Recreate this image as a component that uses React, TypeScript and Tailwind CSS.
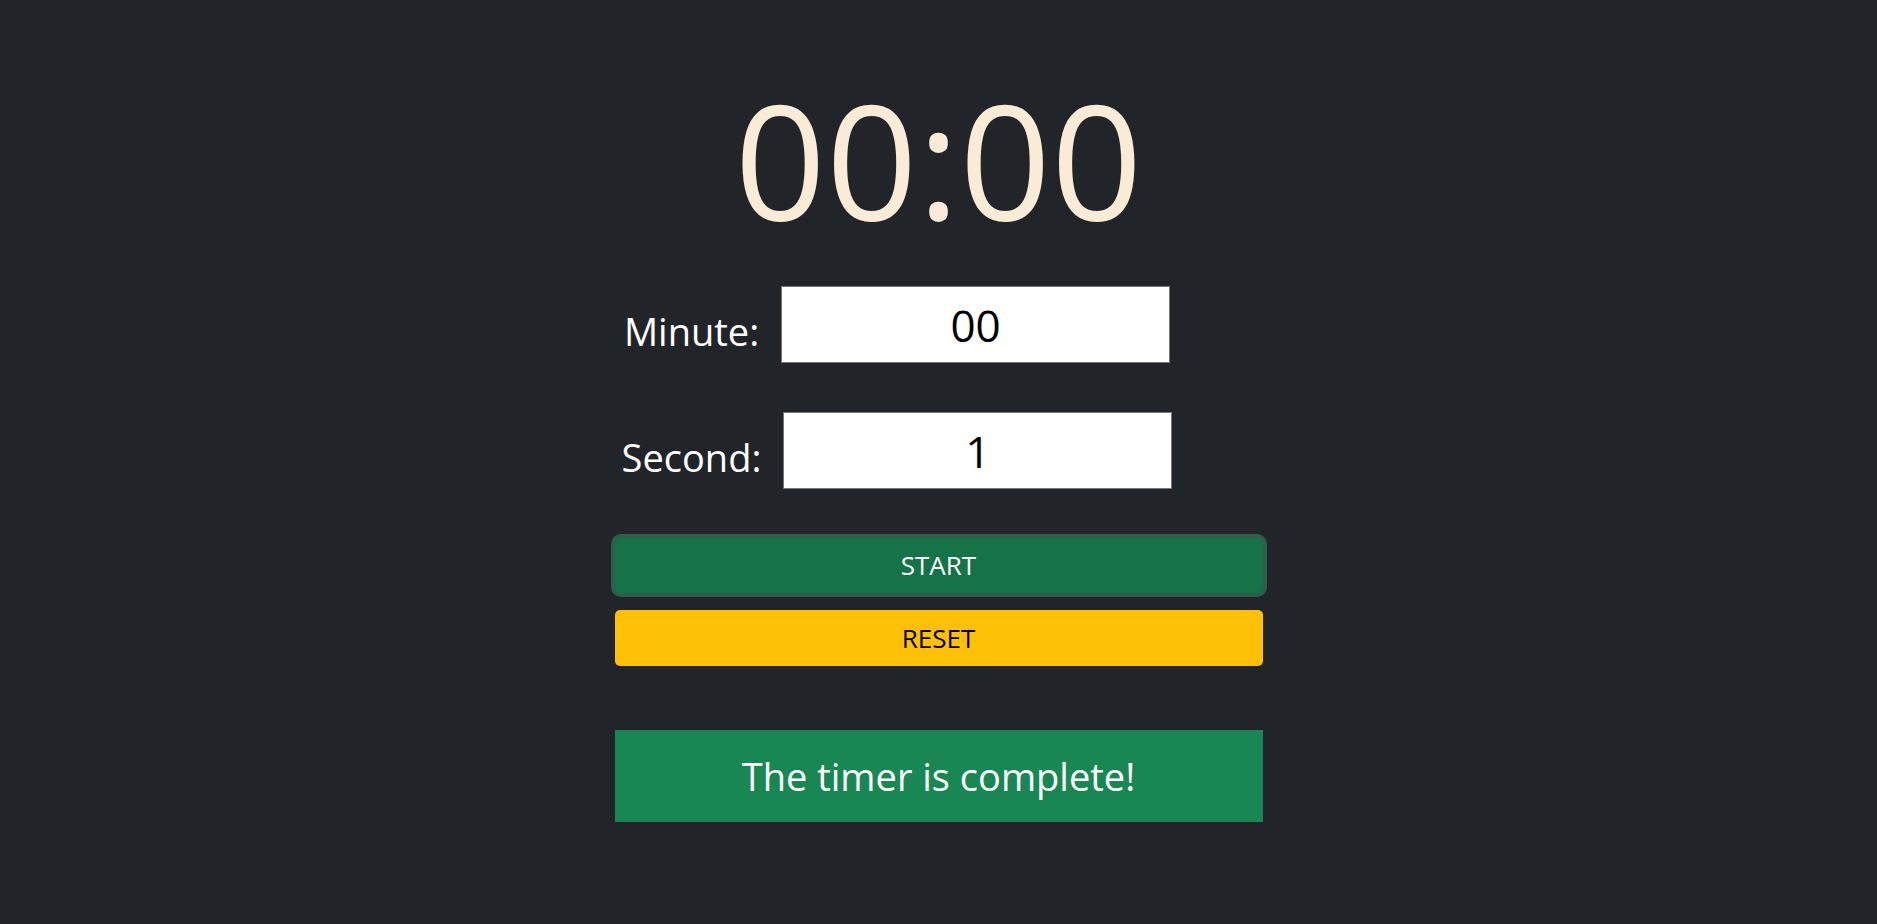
import { useEffect, useState } from "react";

const pad = (n: number) => String(n).padStart(2, "0");

export default function App() {
  const [minute, setMinute] = useState("00");
  const [second, setSecond] = useState("1");
  const [left, setLeft] = useState(0);
  const [running, setRunning] = useState(false);
  const [done, setDone] = useState(true);

  // tick once a second while running
  useEffect(() => {
    if (!running) return;
    const timer = setInterval(() => {
      setLeft((prev) => {
        if (prev <= 1) {
          setRunning(false);
          setDone(true);
          return 0;
        }
        return prev - 1;
      });
    }, 1000);
    return () => clearInterval(timer);
  }, [running]);

  const start = () => {
    const total = (parseInt(minute) || 0) * 60 + (parseInt(second) || 0);
    setLeft(total);
    setDone(false);
    setRunning(total > 0);
  };

  const reset = () => {
    setRunning(false);
    setLeft(0);
    setDone(false);
  };

  return (
    <div className="min-h-screen bg-[#212529] font-['Open_Sans',sans-serif] text-white">
      <div className="flex flex-col items-center pt-[78px]">
        {/* Countdown */}
        <div className="text-[160px] leading-none text-[#faebd7]">
          {pad(Math.floor(left / 60))}:{pad(left % 60)}
        </div>

        {/* Inputs */}
        <div className="mt-[48px] flex w-full flex-col items-center gap-[49px] pr-[83px]">
          <div className="flex items-center gap-[22px]">
            <label className="pt-3 text-[38px] leading-none">Minute:</label>
            <input
              value={minute}
              onChange={(e) => setMinute(e.target.value)}
              className="h-[77px] w-[389px] border border-[#767676] bg-white text-center text-[44px] text-black outline-none"
            />
          </div>
          <div className="flex items-center gap-[22px]">
            <label className="pt-3 text-[38px] leading-none">Second:</label>
            <input
              value={second}
              onChange={(e) => setSecond(e.target.value)}
              className="h-[77px] w-[389px] border border-[#767676] bg-white text-center text-[44px] text-black outline-none"
            />
          </div>
        </div>

        {/* Buttons */}
        <div className="mt-[49px] flex w-[648px] flex-col gap-[17px]">
          <button
            onClick={start}
            className="h-[55px] rounded-[6px] bg-[#157347] text-[26px] text-white shadow-[0_0_0_4px_rgba(60,153,110,0.5)]"
          >
            START
          </button>
          <button
            onClick={reset}
            className="h-[56px] rounded-[5px] bg-[#ffc107] text-[26px] text-black"
          >
            RESET
          </button>
        </div>

        {/* Alert */}
        {done && (
          <div className="mt-[64px] flex h-[92px] w-[648px] items-center justify-center bg-[#198754] text-[38px] text-white">
            The timer is complete!
          </div>
        )}
      </div>
    </div>
  );
}
